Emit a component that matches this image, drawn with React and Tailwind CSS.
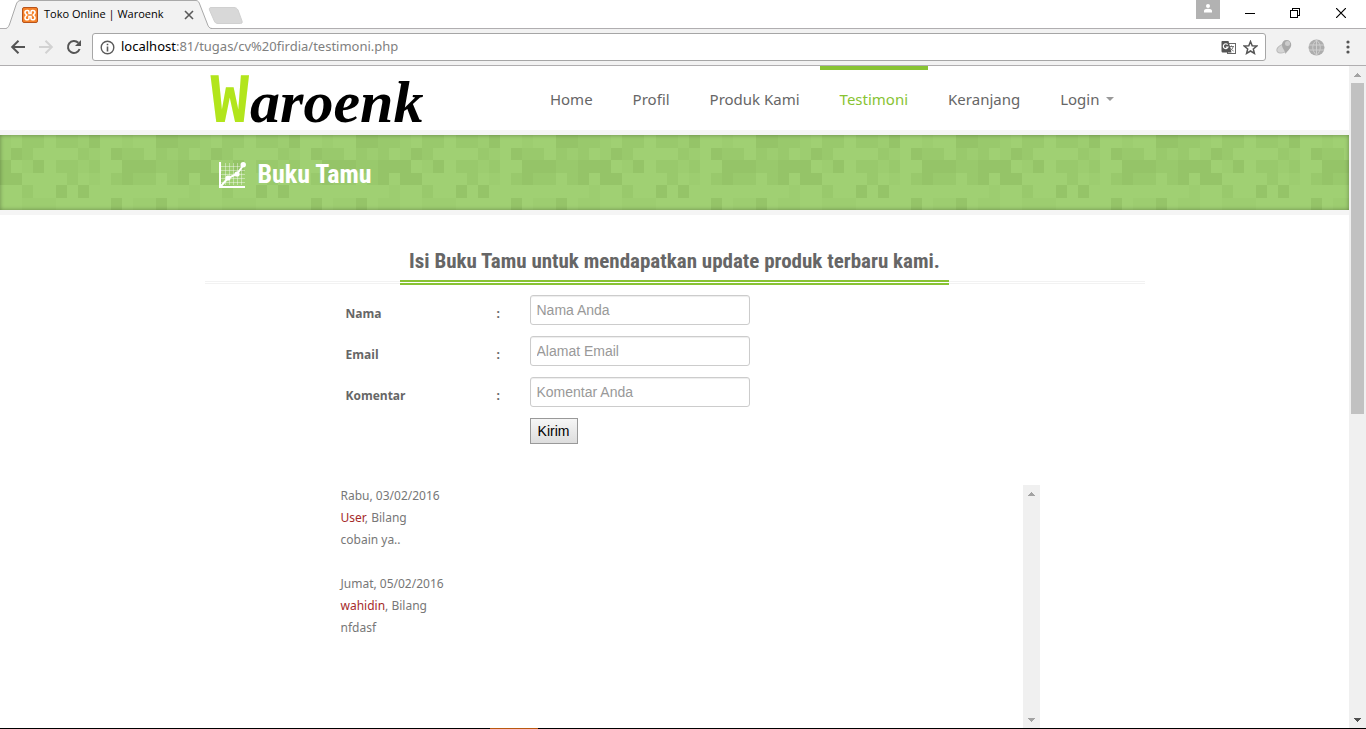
import React from "react";

const TILE = [
  [1, 0, 2, 2, 0, 2, 2, 1, 3, 0, 0, 1, 0, 0, 3, 3, 2, 2],
  [1, 3, 2, 0, 0, 0, 0, 2, 1, 0, 3, 2, 2, 0, 2, 1, 2, 0],
  [3, 0, 1, 3, 0, 2, 2, 1, 2, 0, 0, 3, 3, 3, 2, 2, 3, 3],
  [3, 3, 0, 0, 0, 0, 2, 0, 1, 0, 2, 3, 2, 2, 0, 2, 3, 0],
  [0, 0, 2, 0, 0, 3, 0, 3, 0, 0, 0, 0, 0, 0, 0, 0, 0, 1],
  [0, 0, 1, 1, 1, 0, 0, 0, 0, 0, 3, 0, 1, 1, 3, 0, 1, 1],
];
const SHADES = ["#a0d073", "#9dcd70", "#99c96c", "#95c468"];

const NAV = ["Home", "Profil", "Produk Kami", "Testimoni", "Keranjang", "Login"];

const FIELDS = [
  { id: "nama", label: "Nama", hint: "Nama Anda", type: "text" },
  { id: "email", label: "Email", hint: "Alamat Email", type: "email" },
  { id: "komentar", label: "Komentar", hint: "Komentar Anda", type: "text" },
];

const ENTRIES = [
  { date: "Rabu, 03/02/2016", name: "User", text: "cobain ya.." },
  { date: "Jumat, 05/02/2016", name: "wahidin", text: "nfdasf" },
];

function Arrow({ down, color }) {
  return (
    <svg width="17" height="17" viewBox="0 0 17 17" shapeRendering="crispEdges" aria-hidden="true">
      <path d={down ? "M5 7h7v1h-1v1h-1v1h-1v1h-1v-1h-1v-1h-1v-1h-1z" : "M5 11h7v-1h-1v-1h-1v-1h-1v-1h-1v1h-1v1h-1v1h-1z"} fill={color} />
    </svg>
  );
}

function TabStrip() {
  return (
    <div className="flex h-7 shrink-0 items-start bg-white pl-[6px]">
      <div className="relative h-[29px] w-[206px]">
        <svg className="absolute inset-0" width="206" height="29" viewBox="0 0 206 29" aria-hidden="true">
          <path d="M0 28.500C2 28 3 26 4 23L10 5C11 2 12 .5 15 .5H190C192 .5 193 2 194 5L201 23C202 26 203 28.500 205 28.500V29H0z" fill="#f2f2f2" />
          <path d="M0 28.500C2 28 3 26 4 23L10 5C11 2 12 .5 15 .5H190C192 .5 193 2 194 5L201 23C202 26 203 28.500 206 28.500" fill="none" stroke="#a9a9a9" />
        </svg>
        <div className="relative flex h-[29px] items-center gap-[6px] pl-4">
          <svg width="16" height="16" viewBox="0 0 16 16" aria-hidden="true">
            <rect x=".5" y=".5" width="15" height="15" rx="1.500" fill="#f5822a" stroke="#b8541c" />
            <path d="M5 3.500c-1.500 0-2 .8-2 2S3.800 7 4.800 8C3.800 9 3 9.500 3 10.700s.5 2 2 2h.8c1 0 1.200-.7 1.200-1.500V9.500h2v1.700c0 .8.200 1.500 1.200 1.500h.8c1.500 0 2-.8 2-2S12.200 9 11.200 8c1-1 1.800-1.300 1.800-2.500s-.5-2-2-2h-.8C9.200 3.500 9 4 9 5v1.500H7V5c0-1-.2-1.500-1.200-1.500z" fill="none" stroke="#fff" strokeWidth="1.600" />
          </svg>
          <span className="flex-1 font-['Open_Sans',sans-serif] text-[11px] whitespace-nowrap text-black">Toko Online | Waroenk</span>
          <button type="button" aria-label="Close tab" className="mr-[18px]">
            <svg width="10" height="10" viewBox="0 0 10 10" aria-hidden="true">
              <path d="M1 1l8 8M9 1L1 9" stroke="#5a5a5a" strokeWidth="1.600" />
            </svg>
          </button>
        </div>
      </div>
      <button type="button" aria-label="New tab" className="mt-[6px] -ml-1">
        <svg width="36" height="19" viewBox="0 0 36 19" aria-hidden="true">
          <path d="M3 1.500H26c2 0 3 1 4 2.500l4 11c.6 2-.2 2.500-1.500 2.500H10c-2 0-3-.8-3.700-2.500L1.500 4C1 2.500 1.500 1.500 3 1.500z" fill="#d8d8d8" stroke="#d0d0d0" />
        </svg>
      </button>
      <div className="ml-auto flex items-start">
        <button type="button" aria-label="Profile" className="mr-[6px] flex h-[19px] w-6 justify-center bg-[#b2b2b2] pt-1">
          <svg width="10" height="9" viewBox="0 0 10 9" aria-hidden="true">
            <circle cx="5" cy="2" r="2" fill="#fff" />
            <path d="M1 8.500V7c0-1.500 1.500-2.200 4-2.200S9 5.500 9 7v1.500z" fill="#fff" />
          </svg>
        </button>
        <button type="button" aria-label="Minimize" className="flex h-[26px] w-12 items-center justify-center">
          <svg width="10" height="10" viewBox="0 0 10 10" shapeRendering="crispEdges" aria-hidden="true"><path d="M0 5h10v1H0z" fill="#000" /></svg>
        </button>
        <button type="button" aria-label="Restore" className="flex h-[26px] w-[42px] items-center justify-center">
          <svg width="10" height="10" viewBox="0 0 10 10" shapeRendering="crispEdges" aria-hidden="true"><path d="M.5 2.500h7v7h-7zM2.500 2.500v-2h7v7h-2" fill="none" stroke="#000" /></svg>
        </button>
        <button type="button" aria-label="Close" className="flex h-[26px] w-[50px] items-center justify-center">
          <svg width="10" height="10" viewBox="0 0 10 10" aria-hidden="true"><path d="M0 0l10 10M10 0L0 10" stroke="#000" strokeWidth="1.200" /></svg>
        </button>
      </div>
    </div>
  );
}

function Toolbar() {
  return (
    <div className="flex h-[38px] shrink-0 items-center border-y border-[#b0aeb0] bg-[#f2f2f2] pl-[10px]">
      <button type="button" aria-label="Back">
        <svg width="16" height="16" viewBox="0 0 16 16" aria-hidden="true"><path d="M15 8H2.500M8.500 1.800L2.200 8l6.300 6.200" fill="none" stroke="#555" strokeWidth="2" /></svg>
      </button>
      <button type="button" aria-label="Forward" className="ml-3">
        <svg width="16" height="16" viewBox="0 0 16 16" aria-hidden="true"><path d="M1 8h12.500M7.500 1.800L13.800 8l-6.300 6.200" fill="none" stroke="#d2d2d2" strokeWidth="2" /></svg>
      </button>
      <button type="button" aria-label="Reload" className="ml-3">
        <svg width="16" height="16" viewBox="0 0 16 16" aria-hidden="true">
          <path d="M13.600 10A6 6 0 1 1 12.300 3.800" fill="none" stroke="#555" strokeWidth="2" />
          <path d="M15 1v6H9z" fill="#555" />
        </svg>
      </button>
      <div className="ml-[10px] flex h-7 flex-1 items-center rounded-[3px] border border-[#a6a6a6] bg-white pr-[7px] pl-[7px]">
        <svg width="15" height="15" viewBox="0 0 15 15" aria-hidden="true">
          <circle cx="7.500" cy="7.500" r="6.300" fill="none" stroke="#5a5a5a" strokeWidth="1.400" />
          <path d="M6.700 3.700h1.600v1.600H6.700zM6.700 6.400h1.600v5H6.700z" fill="#5a5a5a" />
        </svg>
        <p className="ml-[6px] flex-1 font-['Noto_Sans',sans-serif] text-[13px] text-[#808080]">
          <span className="text-black">localhost</span>:81/tugas/cv%20firdia/testimoni.php
        </p>
        <button type="button" aria-label="Translate this page">
          <svg width="15" height="15" viewBox="0 0 15 15" aria-hidden="true">
            <rect x="6.500" y="3.500" width="8" height="10" fill="#fff" stroke="#666" />
            <path d="M8 6.500h5M10.500 5.500v1M12.200 6.500c-.5 2-1.700 3.500-3.400 4.500M9 7.500c.7 1.600 2 2.800 3.600 3.500" fill="none" stroke="#777" />
            <path d="M1 1h6.500l3 11.500H2C1.200 12.500.5 12 .5 11V1.800z" fill="#555" />
            <path d="M6.600 4.600A2.400 2.400 0 1 0 7 7H4.800" fill="none" stroke="#fff" strokeWidth="1.200" />
          </svg>
        </button>
        <button type="button" aria-label="Bookmark this page" className="ml-[7px]">
          <svg width="15" height="15" viewBox="0 0 15 15" aria-hidden="true">
            <path d="M7.500 1.500l1.700 4.200 4.600.3-3.500 3 1.100 4.400-3.900-2.400-3.900 2.400L4.700 9l-3.500-3 4.600-.3z" fill="none" stroke="#555" strokeWidth="1.500" />
          </svg>
        </button>
      </div>
      <button type="button" aria-label="Download extension" className="ml-[10px]">
        <svg width="17" height="16" viewBox="0 0 17 16" aria-hidden="true">
          <ellipse cx="7" cy="9.500" rx="6.500" ry="4" transform="rotate(-25 7 9.500)" fill="#d4d4d4" stroke="#bbb" />
          <path d="M10.500 1A4.500 4.500 0 0 1 15.200 6c0 3-3.500 5.500-5.700 9C9 11 6 9.500 6 6a4.500 4.500 0 0 1 4.500-5z" fill="#a9a9a9" />
          <circle cx="11.500" cy="4.500" r="2.500" fill="#ccc" />
        </svg>
      </button>
      <button type="button" aria-label="Network extension" className="ml-[15px]">
        <svg width="17" height="17" viewBox="0 0 17 17" aria-hidden="true">
          <circle cx="8.500" cy="8.500" r="8" fill="#adadad" />
          <path d="M1 6h15M1 11h15M8.500 1v15M8.500 1c-5 4-5 11 0 15M8.500 1c5 4 5 11 0 15" fill="none" stroke="#cfcfcf" />
        </svg>
      </button>
      <button type="button" aria-label="Menu" className="mr-4 ml-[21px]">
        <svg width="4" height="14" viewBox="0 0 4 14" aria-hidden="true">
          <circle cx="2" cy="2" r="1.600" fill="#555" /><circle cx="2" cy="7" r="1.600" fill="#555" /><circle cx="2" cy="12" r="1.600" fill="#555" />
        </svg>
      </button>
    </div>
  );
}

function Header() {
  return (
    <header className="shrink-0 border-b-[5px] border-[#f5f5f5] bg-white">
      <div className="mx-auto flex h-16 max-w-[940px] justify-between pr-[11px] pl-[6px]">
        <a href="#home" className="flex items-baseline gap-px pt-1 leading-[60px] font-bold">
          <span className="font-['DejaVu_Sans_Mono',monospace] text-[64px] text-[#b2e51c]">W</span>
          <span className="font-['Liberation_Serif',serif] text-[60px] text-black italic">aroenk</span>
        </a>
        <nav className="flex font-['Noto_Sans',sans-serif] text-[15px] text-[#666]">
          {NAV.map((item) => (
            <a
              key={item}
              href={"#" + item.toLowerCase().replace(" ", "-")}
              className={
                item === "Testimoni"
                  ? "flex items-center border-t-4 border-[#88c333] px-5 pb-[2px] text-[#88c333]"
                  : "flex items-center gap-[6px] border-t-4 border-transparent px-5 pb-[2px]"
              }
            >
              {item}
              {item === "Login" && (
                <svg width="8" height="4" viewBox="0 0 8 4" aria-hidden="true"><path d="M0 0h8L4 4z" fill="#999" /></svg>
              )}
            </a>
          ))}
        </nav>
      </div>
    </header>
  );
}

function Banner() {
  return (
    <section className="relative h-20 shrink-0 border-b-[5px] border-[#f5f5f5]">
      <svg className="absolute inset-0 h-full w-full" aria-hidden="true">
        <defs>
          <pattern id="mosaic" width="200" height="75" patternUnits="userSpaceOnUse">
            <g transform="scale(11.1111 12.5)" shapeRendering="crispEdges">
              {TILE.map((row, y) => row.map((s, x) => <rect key={x + "-" + y} x={x} y={y} width="1" height="1" fill={SHADES[s]} />))}
            </g>
          </pattern>
        </defs>
        <rect width="100%" height="75" fill="url(#mosaic)" />
      </svg>
      <div className="relative h-full shadow-[inset_0_0_4px_rgba(0,0,0,0.35)]">
        <div className="mx-auto flex h-full max-w-[940px] items-center gap-3 pt-1 pl-[14px]">
          <svg width="27" height="26" viewBox="0 0 27 26" aria-hidden="true">
            <path d="M6.500 1v22M10.500 1v22M14.500 1v22M18.500 1v22M22.500 1v22M2 4.500h24M2 8.500h24M2 12.500h24M2 16.500h24M2 20.500h24" stroke="#fff" strokeOpacity=".4" />
            <path d="M1 0v25h25" fill="none" stroke="#fff" strokeWidth="2" />
            <path d="M2 24l7-8 9-4 6.500-9" fill="none" stroke="#fff" strokeWidth="2" />
            <circle cx="9" cy="16" r="2.600" fill="#fff" /><circle cx="18" cy="12" r="2.600" fill="#fff" /><circle cx="24.200" cy="2.800" r="2.700" fill="#fff" />
          </svg>
          <h1 className="font-['Roboto_Condensed',Roboto,sans-serif] text-[26px] font-bold text-white">Buku Tamu</h1>
        </div>
      </div>
    </section>
  );
}

function GuestBook() {
  return (
    <main className="mx-auto flex min-h-0 w-full max-w-[940px] flex-1 flex-col">
      <div className="mt-7 flex shrink-0 items-end">
        <div className="mb-px h-[3px] flex-1 border-y border-[#f2f2f2]" />
        <h2 className="border-b-[5px] border-double border-[#88c333] px-[9px] pb-px font-['Roboto_Condensed',Roboto,sans-serif] text-[21px] leading-9 font-bold text-[#666]">
          Isi Buku Tamu untuk mendapatkan update produk terbaru kami.
        </h2>
        <div className="mb-px h-[3px] flex-1 border-y border-[#f2f2f2]" />
      </div>
      <form className="mt-[10px] ml-[141px] flex shrink-0 flex-col gap-[11px]" onSubmit={(e) => e.preventDefault()}>
        {FIELDS.map((f) => (
          <div key={f.id} className="flex">
            <label htmlFor={f.id} className="flex w-[184px] pt-[9px] font-['Open_Sans',sans-serif] text-xs leading-5 font-bold text-[#666]">
              <span className="w-[151px]">{f.label}</span>
              <span>:</span>
            </label>
            <input
              id={f.id}
              type={f.type}
              placeholder={f.hint}
              className="h-[30px] w-[220px] rounded-[3px] border border-[#ccc] bg-white px-[6px] font-['Liberation_Sans',sans-serif] text-sm text-[#555] shadow-[inset_0_1px_1px_rgba(0,0,0,0.075)] placeholder:text-[#999]"
            />
          </div>
        ))}
        <button
          type="submit"
          className="ml-[184px] h-[26px] w-12 border border-[#999] bg-linear-to-b from-[#f6f6f6] to-[#dddddd] font-['Liberation_Sans',sans-serif] text-sm text-black"
        >
          Kirim
        </button>
      </form>
      <section className="mt-[41px] mr-[105px] ml-[136px] flex min-h-0 flex-1 justify-between">
        <div className="flex flex-col gap-[22px] font-['Noto_Sans',sans-serif] text-xs leading-[22px] text-[#777]">
          {ENTRIES.map((e) => (
            <article key={e.date}>
              <p>{e.date}</p>
              <p><span className="text-[#a52a2a]">{e.name}</span>, Bilang</p>
              <p>{e.text}</p>
            </article>
          ))}
        </div>
        <div className="flex w-[17px] flex-col justify-between bg-[#f0f0f0]">
          <Arrow color="#a3a3a3" />
          <Arrow down color="#a3a3a3" />
        </div>
      </section>
    </main>
  );
}

export default function App() {
  return (
    <div className="flex h-screen flex-col overflow-hidden bg-white">
      <TabStrip />
      <Toolbar />
      <div className="flex min-h-0 flex-1">
        <div className="flex min-w-0 flex-1 flex-col">
          <Header />
          <Banner />
          <GuestBook />
        </div>
        <div className="flex w-[17px] shrink-0 flex-col bg-[#f0f0f0]">
          <Arrow color="#a3a3a3" />
          <div className="mx-[2px] h-1/2 bg-[#c1c1c1]" />
          <div className="mt-auto"><Arrow down color="#505050" /></div>
        </div>
      </div>
      <div className="flex h-px shrink-0 bg-black pl-[490px]">
        <div className="w-12 bg-[#b8590f]" />
      </div>
    </div>
  );
}
